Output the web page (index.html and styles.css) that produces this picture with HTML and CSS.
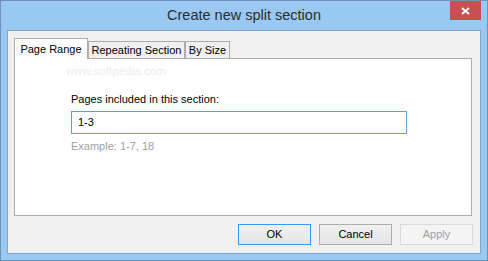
FILE: index.html
```html
<!DOCTYPE html>
<html lang="en">
<head>
  <meta charset="UTF-8">
  <title>Create new split section</title>
  <link rel="stylesheet" href="styles.css">
</head>
<body>
  <div class="window">
    <div class="titlebar">
      <div></div>
      <div class="title">Create new split section</div>
      <div class="tombol-close">
        <svg width="9" height="8" viewBox="0 0 9 8">
          <path d="M1 1 L8 7 M8 1 L1 7" stroke="#fff" stroke-width="2" fill="none"/>
        </svg>
      </div>
    </div>
    <div class="client">
      <div class="tabs">
        <div class="tab tab-aktif tab-page">Page Range</div>
        <div class="tab tab-repeat">Repeating Section</div>
        <div class="tab tab-size">By Size</div>
      </div>
      <div class="panel">
        <div class="watermark">www.softpedia.com</div>
        <div class="label">Pages included in this section:</div>
        <div class="input">1-3</div>
        <div class="hint">Example: 1-7, 18</div>
      </div>
      <div class="buttons">
        <div class="btn btn-default">OK</div>
        <div class="btn">Cancel</div>
        <div class="btn btn-disabled">Apply</div>
      </div>
    </div>
  </div>
</body>
</html>
```

FILE: styles.css
```css
body {
  margin: 0;
  font-family: "Liberation Sans", Arial, sans-serif;
  font-size: 11px;
  color: #000;
}

.window {
  width: 488px;
  height: 261px;
  box-sizing: border-box;
  border: 1px solid #6f93b8;
  background: #99c9f3;
  display: flex;
  flex-direction: column;
}

.titlebar {
  height: 29px;
  display: grid;
  grid-template-columns: 1fr auto 1fr;
  align-items: start;
  padding-right: 6px;
}

.title {
  font-size: 14.5px;
  color: #2d2d2d;
  line-height: 29px;
  padding-left: 6px;
}

.tombol-close {
  justify-self: end;
  width: 31px;
  height: 19px;
  background: #c75050;
  display: flex;
  align-items: center;
  justify-content: center;
}

.client {
  flex: 1;
  margin: 0 6px 6px 6px;
  border: 1px solid #84a6c9;
  background: #f0f0f0;
  padding: 7px 7px 8px 6px;
  display: flex;
  flex-direction: column;
}

.tabs {
  display: flex;
  align-items: flex-end;
  height: 20px;
}

.tab {
  box-sizing: border-box;
  height: 17px;
  border: 1px solid #adadad;
  border-bottom: none;
  background: #f0f0f0;
  text-align: center;
  line-height: 16px;
}

.tab-aktif {
  height: 21px;
  margin-bottom: -1px;
  background: #fff;
  position: relative;
  z-index: 1;
  line-height: 20px;
}

.tab-page { width: 74px; }
.tab-repeat { width: 97px; }
.tab-size { width: 45px; }

.panel {
  height: 158px;
  box-sizing: border-box;
  margin-right: 1px;
  border: 1px solid #adadad;
  background: #fff;
  padding: 34px 0 0 56px;
  position: relative;
}

.watermark {
  position: absolute;
  left: 51px;
  top: 6px;
  color: #ededed;
  font-size: 11px;
  letter-spacing: 0.3px;
}

.label {
  line-height: 13px;
}

.input {
  box-sizing: border-box;
  width: 336px;
  height: 23px;
  margin-top: 5px;
  border: 1px solid #5f9fe0;
  padding-left: 6px;
  line-height: 21px;
}

.hint {
  margin-top: 6px;
  color: #a0a0a0;
  line-height: 13px;
}

.buttons {
  display: flex;
  justify-content: flex-end;
  gap: 8px;
  margin-top: 8px;
}

.btn {
  box-sizing: border-box;
  width: 73px;
  height: 21px;
  border: 1px solid #adadad;
  background: linear-gradient(#f0f0f0, #e5e5e5);
  text-align: center;
  line-height: 19px;
}

.btn-default {
  border-color: #3399ff;
}

.btn-disabled {
  border-color: #d9d9d9;
  background: #f4f4f4;
  color: #a0a0a0;
}
```
